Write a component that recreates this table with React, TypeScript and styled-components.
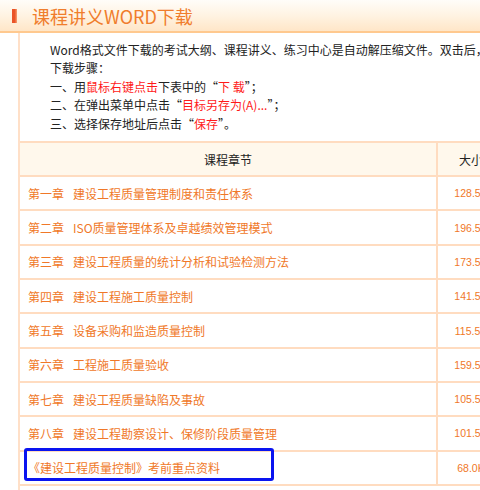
import React from "react";
import styled, { createGlobalStyle } from "styled-components";

const Global = createGlobalStyle`
  html, body { margin: 0; padding: 0; background: #fff; overflow: hidden; }
  body { width: 480px; height: 490px; font-family: "Noto Sans CJK SC", "Liberation Sans", sans-serif; }
`;

const Page = styled.div`
  width: 540px;
`;

const Header = styled.div`
  height: 31px;
  display: flex;
  align-items: center;
  padding-left: 12px;
  gap: 15px;
  background: linear-gradient(to bottom, #fffdf9 0%, #fff3e2 50%, #ffe6c8 100%);
  border-bottom: 2px solid #ffc98f;
`;

const Bar = styled.span`
  width: 5px;
  height: 14px;
  background: linear-gradient(to right, #ea5427 0%, #ea5427 55%, #f7a173 100%);
`;

const Title = styled.h1`
  margin: 0;
  font-size: 18px;
  font-weight: normal;
  color: #f07d2c;
  line-height: 1;
`;

const Panel = styled.div`
  margin-left: 18px;
  border-left: 2px solid #ffe0c8;
  padding-top: 8px;
  height: 460px;
`;

const Notes = styled.div`
  padding-left: 30px;
  font-size: 12px;
  line-height: 18.4px;
  color: #222;
  margin-bottom: 8px;
`;

const Line = styled.div`
  white-space: nowrap;
`;

const Red = styled.span`
  color: #ff1a1a;
`;

const Table = styled.div`
  display: grid;
  grid-template-columns: 418px 66px;
  border-top: 2px solid #ffdcc0;
`;

const Cell = styled.div<{ $head?: boolean; $num?: boolean; $h: number }>`
  position: relative;
  height: ${(p) => p.$h}px;
  box-sizing: border-box;
  display: flex;
  align-items: center;
  gap: 9px;
  border-bottom: 2px solid #ffdcc0;
  border-right: ${(p) => (p.$num ? "none" : "2px solid #ffdcc0")};
  background: ${(p) => (p.$head ? "#fff8ec" : "#fff")};
  justify-content: ${(p) => (p.$head || p.$num ? "center" : "flex-start")};
  padding-left: ${(p) => (p.$head || p.$num ? "0" : "8px")};
  font-size: ${(p) => (p.$num && !p.$head ? "10.5px" : "12px")};
  font-family: ${(p) =>
    p.$num && !p.$head
      ? `"Liberation Sans", "DejaVu Sans", sans-serif`
      : `"Noto Sans CJK SC", sans-serif`};
  color: ${(p) => (p.$head ? "#222" : "#f07828")};
  white-space: nowrap;
`;

const Highlight = styled.span`
  position: absolute;
  left: 4px;
  top: -4px;
  width: 250px;
  height: 33px;
  box-sizing: border-box;
  border: 3px solid #0a14f0;
  border-radius: 3px;
`;

const rows: [string, string, string][] = [
  ["第一章", "建设工程质量管理制度和责任体系", "128.5K"],
  ["第二章", "ISO质量管理体系及卓越绩效管理模式", "196.5K"],
  ["第三章", "建设工程质量的统计分析和试验检测方法", "173.5K"],
  ["第四章", "建设工程施工质量控制", "141.5K"],
  ["第五章", "设备采购和监造质量控制", "115.5K"],
  ["第六章", "工程施工质量验收", "159.5K"],
  ["第七章", "建设工程质量缺陷及事故", "105.5K"],
  ["第八章", "建设工程勘察设计、保修阶段质量管理", "101.5K"],
  ["", "《建设工程质量控制》考前重点资料", "68.0K"],
];

export default function App() {
  return (
    <Page>
      <Global />
      <Header>
        <Bar />
        <Title>课程讲义WORD下载</Title>
      </Header>
      <Panel>
        <Notes>
          <Line>Word格式文件下载的考试大纲、课程讲义、练习中心是自动解压缩文件。双击后，将在本地生成文件。</Line>
          <Line>下载步骤：</Line>
          <Line>
            一、用<Red>鼠标右键点击</Red>下表中的“<Red>下 载</Red>”；
          </Line>
          <Line>
            二、在弹出菜单中点击“<Red>目标另存为(A)...</Red>”；
          </Line>
          <Line>
            三、选择保存地址后点击“<Red>保存</Red>”。
          </Line>
        </Notes>
        <Table>
          <Cell $head $h={34}>课程章节</Cell>
          <Cell $head $num $h={34}>大小</Cell>
          {rows.map(([chapter, name, size], i) => (
            <React.Fragment key={name}>
              <Cell $h={34.33}>
                {i === rows.length - 1 && <Highlight />}
                {chapter && <span>{chapter}</span>}
                <span>{name}</span>
              </Cell>
              <Cell $num $h={34.33}>{size}</Cell>
            </React.Fragment>
          ))}
        </Table>
      </Panel>
    </Page>
  );
}
